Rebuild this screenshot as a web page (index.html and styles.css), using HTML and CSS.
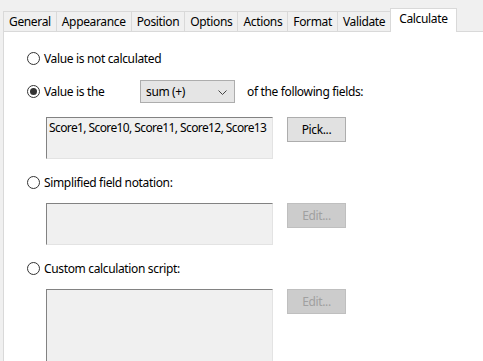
FILE: index.html
```html
<!DOCTYPE html>
<html lang="en">
<head>
    <meta charset="UTF-8">
    <meta name="viewport" content="width=device-width, initial-scale=1.0">
    <title>Text Field Properties</title>
    <link rel="stylesheet" href="styles.css">
</head>
<body>
    <div class="tabs">
        <div class="tab">General</div>
        <div class="tab">Appearance</div>
        <div class="tab">Position</div>
        <div class="tab">Options</div>
        <div class="tab">Actions</div>
        <div class="tab">Format</div>
        <div class="tab">Validate</div>
        <div class="tab active">Calculate</div>
    </div>

    <div class="panel">
        <label class="option">
            <span class="radio"></span>
            Value is not calculated
        </label>

        <div class="option option-select">
            <label class="option-label">
                <span class="radio checked"></span>
                Value is the
            </label>
            <div class="select">
                <span>sum (+)</span>
                <svg class="chevron" width="9" height="5" viewBox="0 0 9 5">
                    <path d="M0.5 0.5 L4.5 4.5 L8.5 0.5" fill="none" stroke="#444" stroke-width="1"/>
                </svg>
            </div>
            <span class="after">of the following fields:</span>
        </div>

        <div class="field-row">
            <div class="field">Score1, Score10, Score11, Score12, Score13</div>
            <button class="button">Pick...</button>
        </div>

        <label class="option">
            <span class="radio"></span>
            Simplified field notation:
        </label>

        <div class="field-row">
            <div class="field"></div>
            <button class="button" disabled>Edit...</button>
        </div>

        <label class="option">
            <span class="radio"></span>
            Custom calculation script:
        </label>

        <div class="field-row">
            <div class="field tall"></div>
            <button class="button" disabled>Edit...</button>
        </div>
    </div>
</body>
</html>
```

FILE: styles.css
```css
body {
    margin: 0;
    background: #f0f0f0;
    font-family: "Noto Sans", "Segoe UI", sans-serif;
    font-size: 12px;
    letter-spacing: -0.35px;
    color: #000;
    height: 361px;
    overflow: hidden;
}

.tabs {
    display: flex;
    align-items: flex-end;
    padding: 11px 0 0 3px;
    height: 20px;
}

.tab {
    height: 19px;
    line-height: 19px;
    padding: 0 5px;
    border: 1px solid #d9d9d9;
    border-bottom: none;
    margin-left: -1px;
    background: #f0f0f0;
}

.tab:first-child {
    margin-left: 0;
}

.tab.active {
    position: relative;
    height: 23px;
    line-height: 20px;
    margin-bottom: -1px;
    background: #fff;
    padding: 0 8px;
}

.panel {
    background: #fff;
    border-top: 1px solid #d9d9d9;
    border-left: 1px solid #d9d9d9;
    margin-left: 3px;
    padding: 16px 0 0 23px;
    height: 314px;
}

.option {
    display: flex;
    align-items: center;
    height: 20px;
    margin-bottom: 12px;
}

.option-select {
    height: 23px;
    margin-bottom: 14px;
}

.option-label {
    display: flex;
    align-items: center;
    width: 113px;
}

.radio {
    width: 11px;
    height: 11px;
    border: 1px solid #333;
    border-radius: 50%;
    margin-right: 4px;
    display: flex;
    align-items: center;
    justify-content: center;
    background: #fff;
}

.radio.checked::after {
    content: "";
    width: 7px;
    height: 7px;
    border-radius: 50%;
    background: #333;
}

.select {
    display: flex;
    align-items: center;
    justify-content: space-between;
    box-sizing: border-box;
    width: 95px;
    height: 23px;
    padding: 0 7px 0 5px;
    border: 1px solid #adadad;
    background: #e5e5e5;
}

.chevron {
    margin-top: 1px;
}

.after {
    margin-left: 12px;
}

.field-row {
    display: flex;
    align-items: flex-start;
    margin-left: 19px;
    margin-bottom: 13px;
}

.field {
    box-sizing: border-box;
    width: 227px;
    height: 42px;
    padding: 2px 0 0 2px;
    background: #f0f0f0;
    border: 1px solid #e3e3e3;
    border-top-color: #828282;
    border-left-color: #828282;
    white-space: nowrap;
    overflow: hidden;
    line-height: 16px;
    letter-spacing: -0.6px;
}

.field-row + .option {
    margin-bottom: 11px;
}

.field.tall {
    height: 73px;
}

.button {
    box-sizing: border-box;
    width: 59px;
    height: 25px;
    margin-left: 14px;
    border: 1px solid #adadad;
    background: #e1e1e1;
    font-family: inherit;
    font-size: 12px;
    letter-spacing: inherit;
    color: #000;
    padding: 0;
}

.button:disabled {
    background: #cccccc;
    border-color: #bfbfbf;
    color: #a0a0a0;
}
```
